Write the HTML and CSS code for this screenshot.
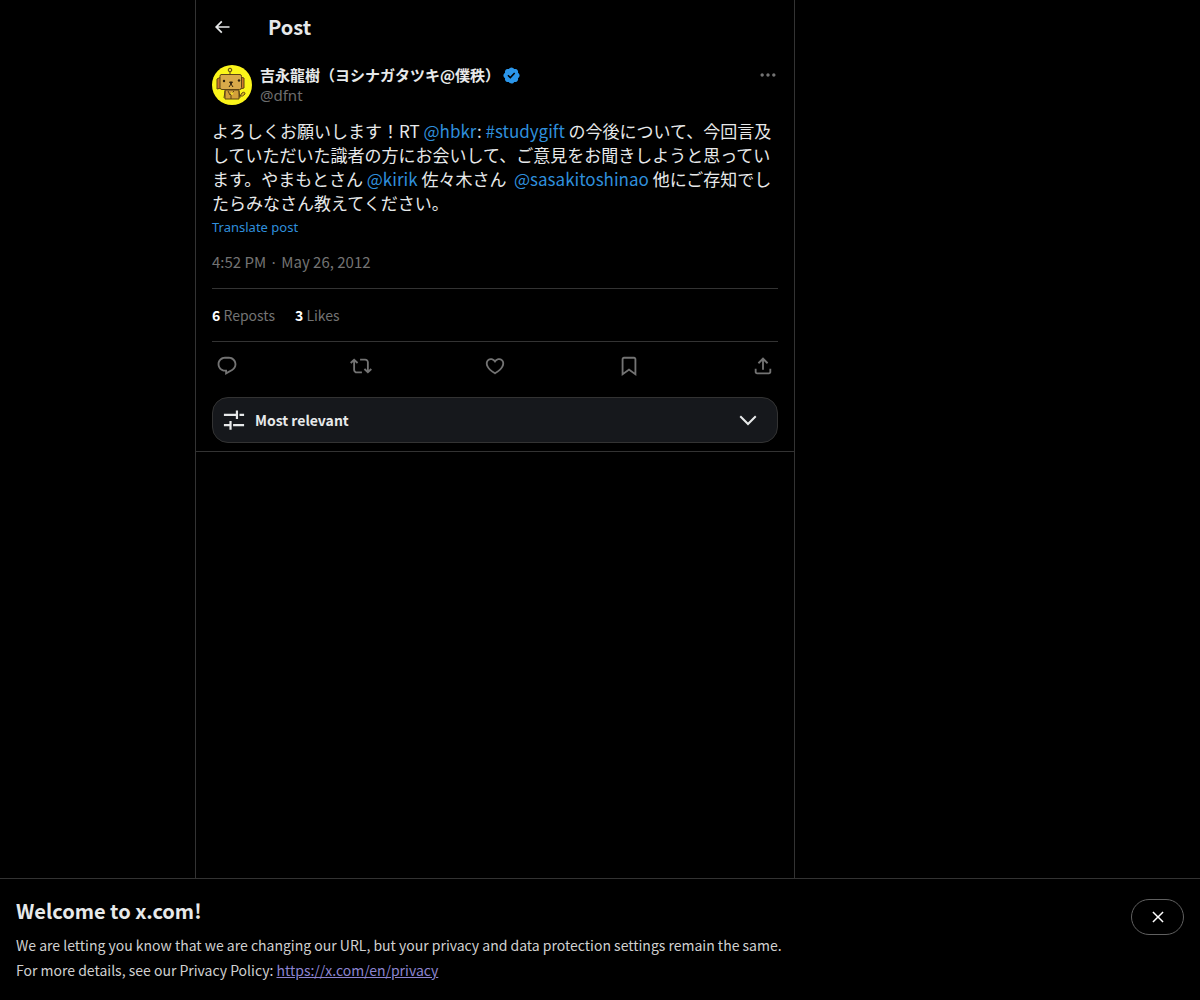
FILE: index.html
```html
<!DOCTYPE html>
<html lang="en">
<head>
    <meta charset="UTF-8">
    <meta name="viewport" content="width=device-width, initial-scale=1.0">
    <title>Post / X</title>
    <link rel="stylesheet" href="styles.css">
</head>
<body>

    <main class="column">
        <header class="top-bar">
            <button class="icon-button back" aria-label="Back">
                <svg viewBox="0 0 24 24"><path d="M7.414 13l5.043 5.04-1.414 1.42L3.586 12l7.457-7.46 1.414 1.42L7.414 11H21v2H7.414z"/></svg>
            </button>
            <h1>Post</h1>
        </header>

        <article class="post">
            <div class="author">
                <svg class="avatar" viewBox="0 0 40 40" role="img" aria-label="Avatar">
                    <circle cx="20" cy="20" r="20" fill="#fbf51a"/>
                    <g stroke="#5d4415" stroke-width="1">
                        <path d="M18 9V6" fill="none"/>
                        <circle cx="18" cy="5" r="1.8" fill="#e8dc2a"/>
                        <path d="M27 31q4 1 6-2 0-3-3-1l-2 3" fill="#e0c020"/>
                        <path d="M13 25h14v9H13z" fill="#d3a13b"/>
                        <path d="M13 26l-1 7M27 26l1 7M16 26l2 4 4-4M19 30v4" fill="none"/>
                        <path d="M5 14l4-2v11l-4 1zM28 12l4 1v10l-4 1z" fill="#cd7a2c"/>
                        <path d="M9 9.500h19q1.500 0 1.500 2v11q0 2-2 2H10q-2 0-2-2v-11q0-2 1-2z" fill="#d9aa4a"/>
                    </g>
                    <circle cx="12" cy="16" r="1.200" fill="#2e210c"/>
                    <circle cx="27" cy="15.500" r="1.200" fill="#2e210c"/>
                    <path d="M17.500 17h3l-1.500 2zM19 19l-2 3M19 19l2 3" fill="#2e210c" stroke="#2e210c" stroke-width="1"/>
                    <circle cx="20" cy="28.500" r="1.300" fill="#f0da2d"/>
                </svg>
                <div class="names">
                    <div class="display-name">
                        <span>吉永龍樹（ヨシナガタツキ@僕秩）</span>
                        <svg class="badge" viewBox="0 0 22 22" role="img" aria-label="Verified account"><path d="M20.396 11c-.018-.646-.215-1.275-.57-1.816-.354-.54-.852-.972-1.438-1.246.223-.607.27-1.264.14-1.897-.131-.634-.437-1.218-.882-1.687-.47-.445-1.053-.75-1.687-.882-.633-.13-1.290-.083-1.897.14-.273-.587-.704-1.086-1.245-1.440S11.647 1.620 11 1.604c-.646.017-1.273.213-1.813.568s-.969.854-1.240 1.440c-.608-.223-1.267-.272-1.902-.14-.635.130-1.220.436-1.690.882-.445.470-.749 1.055-.878 1.688-.130.633-.080 1.290.144 1.896-.587.274-1.087.705-1.443 1.245-.356.540-.555 1.170-.574 1.817.020.647.218 1.276.574 1.817.356.540.856.972 1.443 1.245-.224.606-.274 1.263-.144 1.896.130.634.433 1.218.877 1.688.470.443 1.054.747 1.687.878.633.132 1.290.084 1.897-.136.274.586.705 1.084 1.246 1.439.540.354 1.170.551 1.816.569.647-.016 1.276-.213 1.817-.567s.972-.854 1.245-1.440c.604.239 1.266.296 1.903.164.636-.132 1.220-.447 1.680-.907.460-.460.776-1.044.908-1.681s.075-1.299-.165-1.903c.586-.274 1.084-.705 1.439-1.246.354-.540.551-1.170.569-1.816zM9.662 14.850l-3.429-3.428 1.293-1.302 2.072 2.072 4.400-4.794 1.347 1.246z"/></svg>
                    </div>
                    <div class="handle">@dfnt</div>
                </div>
                <button class="icon-button more" aria-label="More">
                    <svg viewBox="0 0 24 24"><path d="M3 12c0-1.100.9-2 2-2s2 .9 2 2-.9 2-2 2-2-.9-2-2zm9 2c1.100 0 2-.9 2-2s-.9-2-2-2-2 .9-2 2 .9 2 2 2zm7 0c1.100 0 2-.9 2-2s-.9-2-2-2-2 .9-2 2 .9 2 2 2z"/></svg>
                </button>
            </div>

            <p class="post-text" lang="ja">よろしくお願いします！RT <a href="#">@hbkr</a>: <a href="#">#studygift</a> の今後について、今回言及していただいた識者の方にお会いして、ご意見をお聞きしようと思っています。やまもとさん <a href="#">@kirik</a> 佐々木さん&nbsp; <a href="#">@sasakitoshinao</a> 他にご存知でしたらみなさん教えてください。</p>
            <button class="translate">Translate post</button>
            <div class="date">4:52 PM · May 26, 2012</div>

            <div class="stats">
                <span><b>6</b> Reposts</span>
                <span><b>3</b> Likes</span>
            </div>

            <div class="actions">
                <button class="icon-button" aria-label="Reply">
                    <svg viewBox="0 0 24 24"><path d="M1.751 10c0-4.420 3.584-8 8.005-8h4.366c4.490 0 8.129 3.640 8.129 8.130 0 2.960-1.607 5.680-4.196 7.110l-8.054 4.460v-3.690h-.067c-4.490.1-8.183-3.510-8.183-8.010zm8.005-6c-3.317 0-6.005 2.690-6.005 6 0 3.370 2.770 6.080 6.138 6.010l.351-.010h1.761v2.300l5.087-2.810c1.951-1.080 3.163-3.130 3.163-5.360 0-3.390-2.744-6.130-6.129-6.130H9.756z"/></svg>
                </button>
                <button class="icon-button" aria-label="Repost">
                    <svg viewBox="0 0 24 24"><path d="M4.500 3.880l4.432 4.140-1.364 1.460L5.500 7.550V16c0 1.100.896 2 2 2H13v2H7.500c-2.209 0-4-1.790-4-4V7.550L1.432 9.480.068 8.020 4.500 3.880zM16.500 6H11V4h5.500c2.209 0 4 1.790 4 4v8.450l2.068-1.930 1.364 1.460-4.432 4.140-4.432-4.140 1.364-1.460 2.068 1.930V8c0-1.100-.896-2-2-2z"/></svg>
                </button>
                <button class="icon-button" aria-label="Like">
                    <svg viewBox="0 0 24 24"><path d="M16.697 5.500c-1.222-.060-2.679.510-3.890 2.160l-.805 1.090-.806-1.090C9.984 6.010 8.526 5.440 7.304 5.500c-1.243.070-2.349.780-2.910 1.910-.552 1.120-.633 2.780.479 4.820 1.074 1.970 3.257 4.270 7.129 6.610 3.870-2.340 6.052-4.640 7.126-6.610 1.111-2.040 1.030-3.700.477-4.820-.561-1.130-1.666-1.840-2.908-1.910zm4.187 7.690c-1.351 2.480-4.001 5.120-8.379 7.670l-.503.300-.504-.300c-4.379-2.550-7.029-5.190-8.382-7.670-1.360-2.500-1.410-4.860-.514-6.670.887-1.790 2.647-2.910 4.601-3.010 1.651-.090 3.368.560 4.798 2.010 1.429-1.450 3.146-2.100 4.796-2.010 1.954.1 3.714 1.220 4.601 3.010.896 1.810.846 4.170-.514 6.670z"/></svg>
                </button>
                <button class="icon-button" aria-label="Bookmark">
                    <svg viewBox="0 0 24 24"><path d="M4 4.500C4 3.120 5.119 2 6.500 2h11C18.881 2 20 3.120 20 4.500v18.440l-8-5.710-8 5.710V4.500zM6.500 4c-.276 0-.5.220-.5.500v14.560l6-4.290 6 4.290V4.500c0-.280-.224-.5-.5-.5h-11z"/></svg>
                </button>
                <button class="icon-button" aria-label="Share post">
                    <svg viewBox="0 0 24 24"><path d="M12 2.590l5.700 5.700-1.410 1.420L13 6.410V16h-2V6.410l-3.300 3.300-1.410-1.420L12 2.590zM21 15l-.020 3.510c0 1.380-1.120 2.490-2.500 2.490H5.500C4.110 21 3 19.880 3 18.500V15h2v3.500c0 .280.220.5.5.5h12.980c.280 0 .5-.220.5-.5L19 15h2z"/></svg>
                </button>
            </div>

            <button class="sort">
                <svg viewBox="0 0 24 24"><path d="M14 1.500h2.400v9.500H14V7.700H1V5.300h13zM18 5.300h5v2.400h-5zM7 13h2.400v9.500H7v-3.800H1v-2.400h6zM11 16.300h12v2.400H11z"/></svg>
                <span>Most relevant</span>
                <svg class="chevron" viewBox="0 0 24 24"><path d="M3.543 8.960l1.414-1.420L12 14.590l7.043-7.050 1.414 1.420L12 17.410 3.543 8.960z"/></svg>
            </button>
        </article>
    </main>

    <aside class="notice">
        <div class="notice-text">
            <h2>Welcome to x.com!</h2>
            <p>We are letting you know that we are changing our URL, but your privacy and data protection settings remain the same.</p>
            <p>For more details, see our Privacy Policy: <a href="#">https://x.com/en/privacy</a></p>
        </div>
        <button class="close" aria-label="Close">
            <svg viewBox="0 0 24 24"><path d="M10.590 12L4.540 5.960l1.420-1.420L12 10.590l6.040-6.050 1.420 1.420L13.410 12l6.050 6.040-1.420 1.420L12 13.410l-6.040 6.050-1.420-1.420L10.590 12z"/></svg>
        </button>
    </aside>

</body>
</html>
```

FILE: styles.css
```css
* {
    box-sizing: border-box;
}

body {
    display: grid;
    grid-template-columns: 13fr minmax(auto, 600px) 27fr;
    grid-template-rows: 1fr auto;
    min-height: 100vh;
    margin: 0;
    background-color: #000;
    color: #e7e9ea;
    font-family: "Noto Sans CJK JP", sans-serif;
    font-size: 15px;
    line-height: 20px;
}

h1,
h2,
p {
    margin: 0;
}

a {
    color: #2f8fdc;
    text-decoration: none;
}

button {
    padding: 0;
    border: none;
    background: none;
    color: inherit;
    font: inherit;
    cursor: pointer;
}

svg {
    display: block;
    fill: currentColor;
}

.column {
    grid-column: 2;
    border: solid #333;
    border-width: 0 1px;
}

.top-bar {
    display: flex;
    align-items: center;
    gap: 36px;
    height: 53px;
    padding: 0 16px;
}

.top-bar h1 {
    font-size: 20px;
    line-height: 24px;
}

.icon-button {
    display: flex;
    align-items: center;
    color: #737373;
}

.icon-button svg {
    width: 22px;
    height: 22px;
}

.back {
    color: #e7e9ea;
}

.back svg,
.more svg {
    width: 20px;
    height: 20px;
}

.post {
    padding: 12px 16px 8px;
    border-bottom: 1px solid #333;
}

.author {
    display: flex;
    align-items: flex-start;
    gap: 8px;
}

.avatar {
    width: 40px;
    height: 40px;
}

.names {
    flex: 1;
}

.display-name {
    display: flex;
    align-items: center;
    gap: 2px;
    font-weight: bold;
}

.badge {
    width: 19px;
    height: 19px;
    color: #2b96ea;
}

.handle {
    color: #6e6e6e;
    font-family: "Noto Sans", sans-serif;
}

.post-text {
    margin-top: 14px;
    font-size: 17px;
    line-height: 24px;
}

.translate {
    display: block;
    color: #2f8fdc;
    font-family: "Noto Sans", sans-serif;
    font-size: 13px;
    line-height: 24px;
}

.date {
    padding: 13px 0 16px;
    border-bottom: 1px solid #333;
    color: #737373;
}

.stats {
    display: flex;
    gap: 20px;
    padding: 16px 0;
    border-bottom: 1px solid #333;
    color: #737373;
    font-size: 14px;
}

.stats b {
    color: #fff;
}

.actions {
    display: flex;
    justify-content: space-between;
    height: 47px;
    padding: 0 4px;
}

.sort {
    display: flex;
    align-items: center;
    gap: 10px;
    width: 100%;
    height: 46px;
    margin-top: 8px;
    padding: 0 17px 0 10px;
    border: 1px solid #333;
    border-radius: 16px;
    background-color: #16181c;
    font-size: 14px;
    font-weight: bold;
}

.sort svg {
    width: 22px;
    height: 22px;
}

.sort .chevron {
    width: 24px;
    height: 24px;
    margin-left: auto;
}

.notice {
    display: flex;
    grid-column: 1 / -1;
    align-items: flex-start;
    justify-content: space-between;
    padding: 20px 16px 17px;
    border-top: 1px solid #333;
}

.notice h2 {
    margin-bottom: 10px;
    font-size: 20px;
    line-height: 24px;
}

.notice p {
    color: #d0d0d0;
    font-size: 14px;
    line-height: 25px;
}

.notice a {
    color: #8c84d0;
    text-decoration: underline;
}

.close {
    display: flex;
    align-items: center;
    justify-content: center;
    width: 53px;
    height: 36px;
    border: 1px solid #606060;
    border-radius: 18px;
    color: #fff;
}

.close svg {
    width: 18px;
    height: 18px;
}
```
